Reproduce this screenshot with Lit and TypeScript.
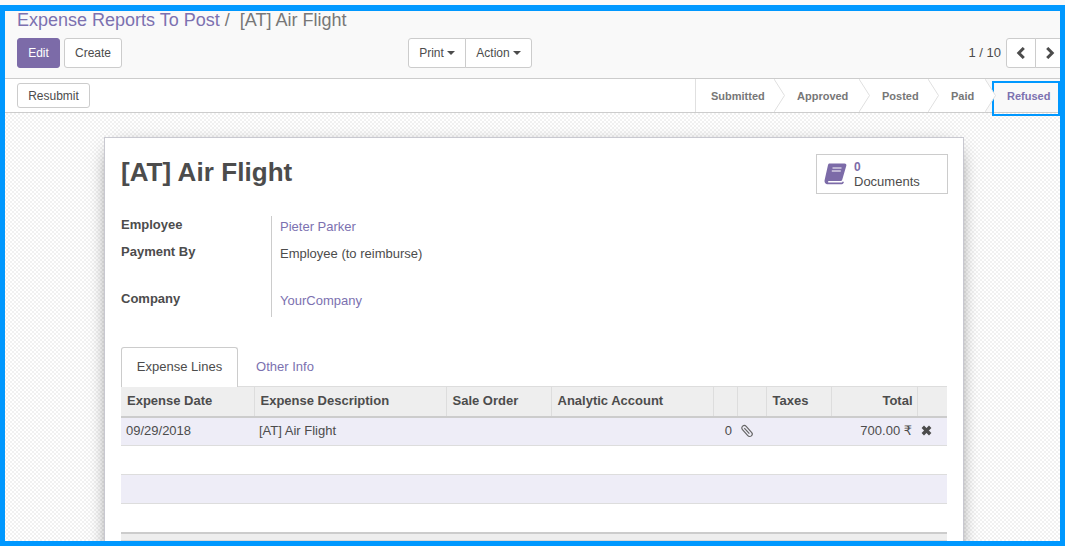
import { LitElement, html, css } from 'lit';
import { customElement } from 'lit/decorators.js';

const caret = html`<span class="caret"></span>`;

const columns = [
  { name: 'Expense Date' },
  { name: 'Expense Description' },
  { name: 'Sale Order' },
  { name: 'Analytic Account' },
  { name: '' },
  { name: '' },
  { name: 'Taxes' },
  { name: 'Total', right: true },
  { name: '' },
];

const steps = ['Submitted', 'Approved', 'Posted', 'Paid'];

@customElement('app-root')
export class AppRoot extends LitElement {
  static styles = css`
    :host {
      display: block;
      position: relative;
      width: 1065px;
      height: 546px;
      overflow: hidden;
      font-family: 'Liberation Sans', Arial, sans-serif;
      font-size: 13px;
      line-height: 18px;
      color: #4c4c4c;
      background: #fff;
    }

    .frame {
      position: absolute;
      left: 0;
      top: 5px;
      width: 1065px;
      height: 541px;
      box-sizing: border-box;
      border: 5px solid #0098ff;
      border-top-width: 6px;
      pointer-events: none;
    }
    .refused-box {
      position: absolute;
      left: 992px;
      top: 81px;
      width: 68px;
      height: 35px;
      box-sizing: border-box;
      border: 2px solid #0098ff;
      pointer-events: none;
    }

    .panel {
      height: 79px;
      box-sizing: border-box;
      padding: 10px 0 0 17px;
      background: #f9f9f9;
      border-bottom: 1px solid #ccc;
    }
    .crumbs {
      font-size: 18px;
      line-height: 20px;
      color: #777;
      white-space: pre;
    }
    .crumbs span { color: #7c71b0; }
    .actions {
      display: flex;
      align-items: center;
      margin-top: 8px;
      height: 30px;
    }
    .btn {
      box-sizing: border-box;
      height: 30px;
      display: flex;
      align-items: center;
      justify-content: center;
      background: #fff;
      border: 1px solid #ccc;
      border-radius: 3px;
      font-size: 12px;
      color: #4c4c4c;
    }
    .edit { width: 43px; background: #7c6ba8; border-color: #7c6ba8; color: #fff; }
    .create { width: 58px; margin-left: 4px; }
    .group { display: flex; margin-left: 286px; }
    .group .btn:first-child { width: 58px; border-radius: 3px 0 0 3px; }
    .group .btn:last-child { width: 67px; border-radius: 0 3px 3px 0; margin-left: -1px; }
    .caret {
      display: inline-block;
      margin-left: 3px;
      border-top: 4px solid #4c4c4c;
      border-left: 4px solid transparent;
      border-right: 4px solid transparent;
    }
    .pager { display: flex; align-items: center; margin-left: auto; }
    .pager-text { margin-right: 5px; color: #4c4c4c; }
    .pager .btn { width: 30px; }
    .pager .btn:first-of-type { border-radius: 3px 0 0 3px; }
    .pager .btn:last-of-type { border-radius: 0 3px 3px 0; margin-left: -1px; }

    .statusbar {
      display: flex;
      align-items: center;
      justify-content: space-between;
      height: 34px;
      box-sizing: border-box;
      padding-left: 17px;
      background: #fff;
      border-bottom: 1px solid #ccc;
    }
    .resubmit { width: 73px; height: 25px; }
    .steps { display: flex; height: 33px; border-left: 1px solid #e0e0e0; }
    .step {
      position: relative;
      box-sizing: border-box;
      height: 33px;
      display: flex;
      align-items: center;
      font-size: 11px;
      font-weight: 700;
      color: #777;
    }
    .step svg { position: absolute; right: -11px; top: 0; z-index: 1; }
    .step:nth-child(1) { width: 78px; padding-left: 15px; }
    .step:nth-child(2) { width: 85px; padding-left: 23px; }
    .step:nth-child(3) { width: 69px; padding-left: 23px; }
    .step:nth-child(4) { width: 57px; padding-left: 23px; }
    .step:nth-child(5) { width: 80px; padding-left: 22px; color: #7c71b0; background: #f9f9f9; }

    .content {
      height: 433px;
      overflow: hidden;
      box-sizing: border-box;
      padding: 24px 0 0 104px;
      background: repeating-conic-gradient(#f1f1f1 0 25%, #fff 0 50%) 0 0 / 4px 4px;
    }
    .sheet {
      position: relative;
      box-sizing: border-box;
      width: 860px;
      height: 460px;
      padding: 16px 15px 0 16px;
      background: #fff;
      border: 1px solid #c8c8d0;
      box-shadow: 0 5px 20px -10px #000;
    }
    .head { display: flex; justify-content: space-between; align-items: flex-start; }
    h1 {
      margin: 0;
      padding-top: 1px;
      font-size: 26px;
      line-height: 34px;
      font-weight: 700;
      letter-spacing: 0.06px;
      color: #4c4c4c;
    }
    .docs {
      display: flex;
      align-items: center;
      box-sizing: border-box;
      width: 132px;
      height: 40px;
      padding-left: 7px;
      border: 1px solid #ccc;
    }
    .docs svg { margin-right: 6px; }
    .docs-text { padding-top: 2px; }
    .docs b { display: block; font-size: 12px; line-height: 13px; color: #7c6ba8; }
    .docs span { display: block; line-height: 15px; }

    .fields {
      display: grid;
      grid-template-columns: 150px 1fr;
      grid-template-rows: 27px 27px 20px 27px;
      margin-top: 22px;
    }
    .label { font-weight: 700; }
    .value { border-left: 1px solid #ccc; padding: 2px 0 0 8px; }
    .value.link { color: #7c71b0; }

    .tabs { display: flex; margin-top: 30px; height: 39px; }
    .tab {
      box-sizing: border-box;
      height: 40px;
      display: flex;
      align-items: center;
      justify-content: center;
      position: relative;
      z-index: 1;
    }
    .tab.active {
      width: 117px;
      padding-bottom: 1px;
      background: #fff;
      border: 1px solid #ccc;
      border-bottom: none;
      border-radius: 3px 3px 0 0;
    }
    .tab.other { width: 94px; color: #7c71b0; }

    table {
      width: 826px;
      table-layout: fixed;
      border-collapse: collapse;
    }
    th {
      box-sizing: border-box;
      height: 30px;
      padding: 0 5px 0 6px;
      text-align: left;
      font-weight: 700;
      background: #eee;
      border-top: 1px solid #ddd;
      border-bottom: 2px solid #ccc;
      border-left: 1px solid #ddd;
      white-space: nowrap;
    }
    th:first-child { border-left: none; }
    th.right { text-align: right; padding-right: 4px; }
    td.right { text-align: right; }
    td { box-sizing: border-box; height: 29px; padding: 0 5px; border-bottom: 1px solid #ddd; }
    tr.odd td { background: #eeedf7; }
    tfoot td { height: 8px; background: #eee; border-top: 2px solid #ccc; border-bottom: 1px solid #d8d8d8; }
    .w1 { width: 133px; }
    .w2 { width: 192px; }
    .w3 { width: 105px; }
    .w4 { width: 162px; }
    .w5 { width: 24px; }
    .w6 { width: 29px; }
    .w7 { width: 65px; }
    .w8 { width: 86px; }
    .w9 { width: 30px; }
    .icon-cell { padding: 0 0 0 4px; }
    .icon-cell svg { display: block; margin-top: -1px; }
    .rupee { font-family: 'DejaVu Sans', sans-serif; }
  `;

  render() {
    return html`
      <div class="panel">
        <div class="crumbs"><span>Expense Reports To Post</span> /  [AT] Air Flight</div>
        <div class="actions">
          <div class="btn edit">Edit</div>
          <div class="btn create">Create</div>
          <div class="group">
            <div class="btn">Print ${caret}</div>
            <div class="btn">Action ${caret}</div>
          </div>
          <div class="pager">
            <span class="pager-text">1 / 10</span>
            <div class="btn">
              <svg width="10" height="12" viewBox="0 0 10 12"><path d="M7.800 1 2.800 6l5 5" fill="none" stroke="#4c4c4c" stroke-width="3"/></svg>
            </div>
            <div class="btn">
              <svg width="10" height="12" viewBox="0 0 10 12"><path d="M2.200 1l5 5-5 5" fill="none" stroke="#4c4c4c" stroke-width="3"/></svg>
            </div>
          </div>
        </div>
      </div>

      <div class="statusbar">
        <div class="btn resubmit">Resubmit</div>
        <div class="steps">
          ${steps.map(
            (s) => html`<div class="step">${s}
              <svg width="11" height="33" viewBox="0 0 11 33"><path d="M0 0l10.500 16.500L0 33" fill="#fff" stroke="#e0e0e0"/></svg>
            </div>`,
          )}
          <div class="step">Refused</div>
        </div>
      </div>

      <div class="content">
        <div class="sheet">
          <div class="head">
            <h1>[AT] Air Flight</h1>
            <div class="docs">
              <svg width="24" height="22" viewBox="0 0 24 22">
                <path d="M5.500 .5H20.500c1.500 0 2.200 1 1.800 2.300L18.300 16.500c-.3 1-.9 1.500-2 1.500H5c-1.300 0-1.500 1.500-.3 1.500H18l.7-1 1.300.5-.8 1.500c-.3.500-.8.700-1.400.7H4c-2.500 0-4-2-3.300-4.500L4 2c.2-.9.700-1.500 1.500-1.500z" fill="#7c6ba8"/>
                <path d="M8.500 5h9M7.800 8h9" stroke="#fff" stroke-width="1.200"/>
              </svg>
              <div class="docs-text"><b>0</b><span>Documents</span></div>
            </div>
          </div>

          <div class="fields">
            <div class="label">Employee</div>
            <div class="value link">Pieter Parker</div>
            <div class="label">Payment By</div>
            <div class="value">Employee (to reimburse)</div>
            <div></div>
            <div class="value"></div>
            <div class="label">Company</div>
            <div class="value link">YourCompany</div>
          </div>

          <div class="tabs">
            <div class="tab active">Expense Lines</div>
            <div class="tab other">Other Info</div>
          </div>

          <table>
            <thead>
              <tr>
                ${columns.map(
                  (c, i) => html`<th class="w${i + 1} ${c.right ? 'right' : ''}">${c.name}</th>`,
                )}
              </tr>
            </thead>
            <tbody>
              <tr class="odd">
                <td>09/29/2018</td>
                <td>[AT] Air Flight</td>
                <td></td>
                <td></td>
                <td class="right">0</td>
                <td class="icon-cell">
                  <svg width="12" height="14" viewBox="0 0 12 14">
                    <g transform="rotate(-42 6 7)" fill="none" stroke="#666" stroke-width="1.200">
                      <rect x="3.500" y=".5" width="5" height="13" rx="2.500"/>
                      <path d="M6 3v7.500"/>
                    </g>
                  </svg>
                </td>
                <td></td>
                <td class="right">700.00 <span class="rupee">₹</span></td>
                <td class="icon-cell">
                  <svg width="11" height="11" viewBox="0 0 11 11"><path d="M1.800 1.800l7.400 7.400M9.200 1.800 1.800 9.200" stroke="#4c4c4c" stroke-width="3.400"/></svg>
                </td>
              </tr>
              <tr><td colspan="9"></td></tr>
              <tr class="odd"><td colspan="9"></td></tr>
              <tr><td colspan="9"></td></tr>
            </tbody>
            <tfoot>
              <tr><td colspan="9"></td></tr>
            </tfoot>
          </table>
        </div>
      </div>

      <div class="refused-box"></div>
      <div class="frame"></div>
    `;
  }
}
